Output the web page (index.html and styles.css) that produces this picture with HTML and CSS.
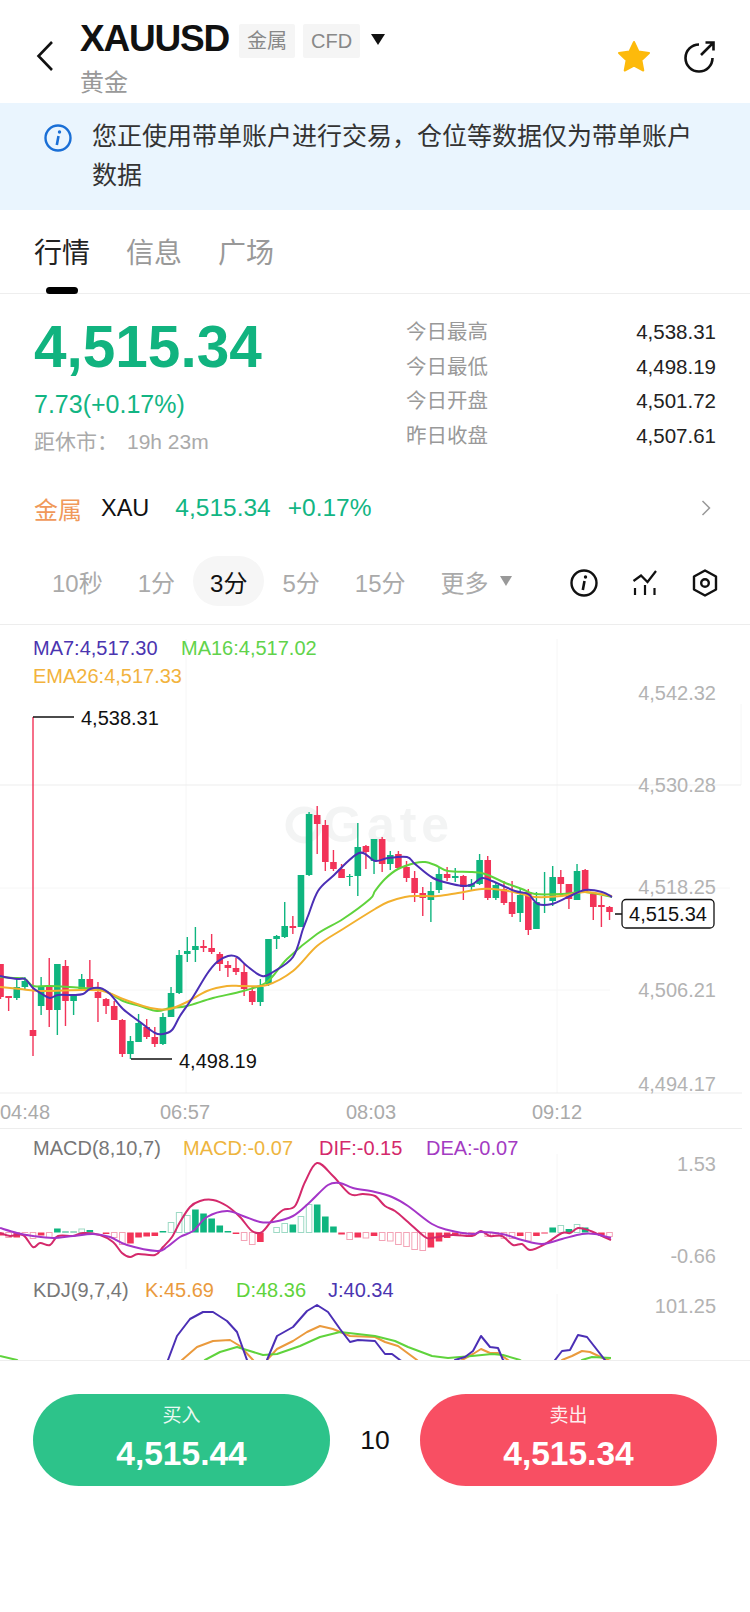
FILE: index.html
```html
<!DOCTYPE html>
<html lang="zh-CN">
<head>
    <meta charset="UTF-8">
    <meta name="viewport" content="width=device-width, initial-scale=1.0">
    <title>XAUUSD</title>
    <link rel="stylesheet" href="styles.css">
</head>
<body>
    <div class="header">
        <svg class="back" width="18" height="32" viewBox="0 0 18 32"><path d="M16 2 2.5 16 16 30" fill="none" stroke="#111" stroke-width="2.6"/></svg>
        <div class="title">
            <div class="title-row">
                <span class="symbol">XAUUSD</span>
                <span class="tag">金属</span>
                <span class="tag">CFD</span>
                <span class="caret"></span>
            </div>
            <div class="name">黄金</div>
        </div>
        <div class="actions">
            <svg width="36" height="34" viewBox="0 0 36 34"><path d="M18 3l4.6 9.6 10.4 1.4-7.6 7.2 1.9 10.3L18 26.6l-9.3 4.9 1.9-10.3L3 14l10.4-1.4z" fill="#fdba0b" stroke="#fdba0b" stroke-width="2" stroke-linejoin="round"/></svg>
            <svg width="34" height="34" viewBox="0 0 34 34"><path d="M16 5.500A13.500 13.500 0 1 0 29.500 19" fill="none" stroke="#111" stroke-width="2.600"/><path d="M18 16 30 4M22.500 3.500h8v8" fill="none" stroke="#111" stroke-width="2.600"/></svg>
        </div>
    </div>

    <div class="notice">
        <svg width="28" height="28" viewBox="0 0 28 28"><circle cx="14" cy="14" r="12.500" fill="none" stroke="#1a6fd6" stroke-width="2.400"/><circle cx="15.500" cy="8" r="1.700" fill="#1a6fd6"/><path d="M14.500 12 12.800 21" stroke="#1a6fd6" stroke-width="2.600" fill="none"/></svg>
        <p>您正使用带单账户进行交易，仓位等数据仅为带单账户数据</p>
    </div>

    <div class="tabs">
        <div class="tab active">行情</div>
        <div class="tab">信息</div>
        <div class="tab">广场</div>
    </div>

    <div class="quote">
        <div class="quote-left">
            <div class="price">4,515.34</div>
            <div class="change">7.73(+0.17%)</div>
            <div class="close-time"><span>距休市：</span><span>19h 23m</span></div>
        </div>
        <div class="quote-right">
            <div class="stat"><span>今日最高</span><b>4,538.31</b></div>
            <div class="stat"><span>今日最低</span><b>4,498.19</b></div>
            <div class="stat"><span>今日开盘</span><b>4,501.72</b></div>
            <div class="stat"><span>昨日收盘</span><b>4,507.61</b></div>
        </div>
    </div>

    <div class="sector">
        <span class="sector-name">金属</span>
        <span class="sector-code">XAU</span>
        <span class="sector-price">4,515.34</span>
        <span class="sector-price">+0.17%</span>
        <svg class="sector-arrow" width="10" height="16" viewBox="0 0 10 16"><path d="M1.500 1 8.500 8l-7 7" fill="none" stroke="#999" stroke-width="1.500"/></svg>
    </div>

    <div class="periods">
        <div class="period">10秒</div>
        <div class="period">1分</div>
        <div class="period active">3分</div>
        <div class="period">5分</div>
        <div class="period">15分</div>
        <div class="period">更多<span class="more-caret"></span></div>
        <div class="tools">
            <svg width="28" height="28" viewBox="0 0 28 28"><circle cx="14" cy="14" r="12.500" fill="none" stroke="#111" stroke-width="2.400"/><circle cx="15.500" cy="8" r="1.700" fill="#111"/><path d="M14.500 12 12.800 21" stroke="#111" stroke-width="2.600" fill="none"/></svg>
            <svg width="26" height="26" viewBox="0 0 26 26"><path d="M1.500 11 9 5.500l6.500 6.500L24 1" fill="none" stroke="#111" stroke-width="2.200"/><path d="M3 18v7M13 15v10M22.500 18v7" stroke="#111" stroke-width="2.200"/></svg>
            <svg width="26" height="28" viewBox="0 0 26 28"><path d="M13 1.500 24 7.500v13L13 26.500 2 20.500v-13z" fill="none" stroke="#111" stroke-width="2.400" stroke-linejoin="round"/><circle cx="13" cy="14" r="3.800" fill="none" stroke="#111" stroke-width="2.400"/></svg>
        </div>
    </div>

    <svg class="chart" id="chart" width="750" height="736" viewBox="0 625 750 736">
        <g id="grid">
            <path class="grid-faint" d="M186 640V1094M557 640V1094M741 705V786M186 1140V1270M557 1155V1270M557 1295V1361M0 889H730M0 991H610"/>
            <path class="grid" d="M0 625.500H750M0 786H741M0 1094H742M0 1129.500H742"/>
        </g>
        <g class="watermark">
            <circle cx="304" cy="826" r="15" fill="none" stroke="#f3f4f4" stroke-width="7"/>
            <text x="323" y="843">Gate</text>
        </g>

        <g id="candles"></g>
        <polyline class="line smooth" stroke="#5fd33c" points="0,978 13,979 25,980 33,987 50,987 83,989 103,991 123,1002 140,1007 157,1012 170,1009 187,1007 213,999 243,992 267,983 287,960 317,935 343,920 370,900 375,892 385,880 398,870 415,864 425,863 435,866 448,872 472,873 485,875 508,885 522,890 535,895 562,895 585,893 612,898"/>
        <polyline class="line smooth" stroke="#f2b02e" points="0,988 20,990 40,992 83,991 103,992 123,1000 143,1007 157,1010 170,1010 187,1003 207,992 227,987 243,987 267,986 293,972 317,947 343,930 375,910 388,903 405,898 418,897 438,897 458,894 482,890 502,891 522,895 535,898 562,897 585,893 612,897"/>
        <polyline class="line smooth" stroke="#4b2fb5" points="0,977 17,980 25,980 33,989 42,995 50,999 58,996 73,996 83,995 90,990 100,989 110,995 123,1010 140,1023 155,1034 163,1035 172,1031 180,1017 193,998 207,975 217,963 228,957 237,958 247,967 262,977 273,973 293,958 303,930 308,917 318,892 333,877 359,854 375,862 388,859 407,858 415,865 433,879 452,885 465,887 473,885 482,879 492,882 515,892 528,895 538,905 552,905 568,898 585,891 602,893 612,898"/>

        <path class="mark" d="M33 718H74M131 1060H172M615 915H622"/>
        <text class="t-dark" x="81" y="726">4,538.31</text>
        <text class="t-dark" x="179" y="1069">4,498.19</text>
        <rect class="last-box" x="622" y="900.500" width="92" height="28.500" rx="4"/>
        <text class="t-dark" x="668" y="922" text-anchor="middle">4,515.34</text>

        <text class="t-legend" x="33" y="656" fill="#4b35b0">MA7:4,517.30</text>
        <text class="t-legend" x="181" y="656" fill="#61d34b">MA16:4,517.02</text>
        <text class="t-legend" x="33" y="683.500" fill="#f2b33d">EMA26:4,517.33</text>

        <g class="t-axis">
            <text x="716" y="701">4,542.32</text>
            <text x="716" y="793">4,530.28</text>
            <text x="716" y="895">4,518.25</text>
            <text x="716" y="998">4,506.21</text>
            <text x="716" y="1092">4,494.17</text>
            <text x="716" y="1172">1.53</text>
            <text x="716" y="1264">-0.66</text>
            <text x="716" y="1314">101.25</text>
        </g>
        <g class="t-time">
            <text x="25" y="1120">04:48</text>
            <text x="185" y="1120">06:57</text>
            <text x="371" y="1120">08:03</text>
            <text x="557" y="1120">09:12</text>
        </g>

        <text class="t-legend" x="33" y="1156" fill="#777">MACD(8,10,7)</text>
        <text class="t-legend" x="183" y="1156" fill="#eeb53e">MACD:-0.07</text>
        <text class="t-legend" x="319" y="1156" fill="#d4296b">DIF:-0.15</text>
        <text class="t-legend" x="426" y="1156" fill="#a33bc2">DEA:-0.07</text>
        <g id="macd"></g>
        <polyline class="line smooth" stroke="#d4296b" points="0,1234 10,1237 23,1236 33,1248 40,1244 50,1246 58,1237 73,1237 83,1234 100,1236 113,1243 122,1254 130,1258 138,1255 155,1256 163,1248 172,1238 180,1223 190,1208 200,1202 213,1201 227,1207 240,1218 252,1232 262,1233 273,1220 283,1211 295,1207 305,1183 317,1164 333,1177 350,1195 363,1195 375,1197 385,1207 395,1212 408,1223 425,1238 432,1239 452,1236 472,1237 481,1232 490,1237 502,1237 513,1246 522,1245 530,1251 545,1245 562,1234 570,1234 578,1229 588,1231 602,1237 611,1241"/>
        <polyline class="line smooth" stroke="#a435c8" points="0,1229 17,1234 33,1237 53,1239 73,1237 93,1235 110,1238 127,1246 157,1252 167,1248 180,1238 193,1232 207,1218 227,1212 243,1217 260,1223 273,1223 293,1217 310,1203 328,1186 340,1184 353,1189 375,1193 392,1198 408,1207 432,1225 448,1231 472,1235 481,1233 502,1235 522,1241 542,1245 562,1240 582,1235 595,1235 611,1239"/>

        <text class="t-legend" x="33" y="1298" fill="#777">KDJ(9,7,4)</text>
        <text class="t-legend" x="145" y="1298" fill="#ea9a3d">K:45.69</text>
        <text class="t-legend" x="236" y="1298" fill="#5fd33c">D:48.36</text>
        <text class="t-legend" x="328" y="1298" fill="#4b35b0">J:40.34</text>
        <polyline class="line" stroke="#ea9a3d" points="170,1375 182,1361 197,1348 213,1342 230,1341 240,1347 253,1361 262,1372 267,1361 277,1350 293,1342 307,1333 320,1327 333,1330 350,1337 375,1338 385,1343 398,1347 417,1361 430,1375 455,1375 462,1361 473,1355 481,1350 490,1354 498,1354 508,1361 520,1370 555,1370 562,1361 572,1357 582,1352 590,1353 605,1360 611,1362"/>
        <polyline class="line" stroke="#5fd33c" points="0,1357 17,1361 30,1375 190,1375 205,1361 220,1353 237,1348 250,1352 263,1356 277,1355 300,1347 320,1338 340,1333 375,1337 395,1342 408,1348 432,1357 448,1359 472,1357 492,1355 503,1356 520,1361 540,1375 570,1375 582,1361 592,1358 611,1359"/>
        <polyline class="line" stroke="#4b2fb5" points="160,1375 168,1361 177,1337 190,1320 203,1313 213,1313 227,1322 237,1333 247,1361 250,1372 262,1372 267,1361 277,1337 293,1328 307,1312 317,1306 328,1313 340,1330 350,1343 358,1341 375,1342 385,1355 392,1355 400,1361 420,1375 448,1375 455,1361 465,1358 473,1352 481,1337 490,1348 498,1349 503,1361 525,1375 548,1375 555,1361 562,1352 570,1351 578,1336 587,1338 605,1361 610,1370"/>
    </svg>

    <div class="footer">
        <div class="trade buy">
            <span class="trade-label">买入</span>
            <span class="trade-price">4,515.44</span>
        </div>
        <div class="spread">10</div>
        <div class="trade sell">
            <span class="trade-label">卖出</span>
            <span class="trade-price">4,515.34</span>
        </div>
    </div>

    <script src="chart.js"></script>
</body>
</html>
```

FILE: styles.css
```css
* {
    box-sizing: border-box;
}

body {
    font-family: "Liberation Sans", "Noto Sans CJK SC", sans-serif;
    margin: 0;
    padding: 0;
    width: 750px;
    height: 1612px;
    overflow: hidden;
    background-color: #fff;
    color: #111;
}

.header {
    display: flex;
    height: 103px;
    padding-left: 36px;
}

.back {
    margin-top: 40px;
}

.title {
    margin-left: 26px;
    padding-top: 21px;
}

.title-row {
    display: flex;
    align-items: center;
    height: 36px;
}

.symbol {
    font-size: 37px;
    font-weight: bold;
    letter-spacing: -1.200px;
    margin-right: 10px;
}

.tag {
    background-color: #f5f5f5;
    color: #888;
    font-size: 20px;
    height: 34px;
    line-height: 34px;
    padding: 0 8px;
    margin-right: 8px;
    border-radius: 2px;
    margin-top: 3px;
}

.caret {
    margin-left: 3px;
    margin-top: 0;
    border-left: 7px solid transparent;
    border-right: 7px solid transparent;
    border-top: 11px solid #111;
}

.name {
    color: #999;
    font-size: 24px;
    line-height: 30px;
    margin-top: 11px;
}

.actions {
    display: flex;
    gap: 31px;
    margin-left: auto;
    margin-top: 39px;
    padding-right: 33px;
    align-items: flex-start;
}

.notice {
    display: flex;
    height: 107px;
    padding: 14px 48px 0 44px;
    background-color: #eaf5fe;
}

.notice svg {
    flex: none;
    margin-top: 7px;
}

.notice p {
    margin: 0 0 0 20px;
    font-size: 25px;
    line-height: 39px;
    color: #333;
}

.tabs {
    display: flex;
    gap: 36px;
    height: 84px;
    padding: 24px 0 0 34px;
    border-bottom: 1px solid #eee;
}

.tab {
    position: relative;
    font-size: 28px;
    line-height: 40px;
    color: #999;
}

.tab.active {
    color: #222;
}

.tab.active::after {
    content: "";
    position: absolute;
    left: 12px;
    top: 53px;
    width: 32px;
    height: 7px;
    border-radius: 4px;
    background-color: #000;
}

.quote {
    display: flex;
    justify-content: space-between;
    height: 196px;
    padding: 20px 34px 0 34px;
}

.price {
    color: #11b37f;
    font-size: 58.500px;
    font-weight: bold;
    line-height: 66px;
}

.change {
    color: #12b583;
    font-size: 25px;
    line-height: 30px;
    margin-top: 9px;
}

.close-time {
    display: flex;
    gap: 9px;
    color: #aaa;
    font-size: 21px;
    line-height: 28px;
    margin-top: 9px;
}

.quote-right {
    width: 310px;
    padding-top: 1px;
}

.stat {
    display: flex;
    justify-content: space-between;
    height: 34.500px;
    line-height: 34.500px;
    font-size: 20.500px;
    color: #999;
}

.stat b {
    font-weight: normal;
    color: #222;
}

.sector {
    display: flex;
    align-items: center;
    height: 36px;
    font-size: 24.500px;
    padding: 0 39px 0 34px;
    color: #12b583;
}

.sector-name {
    color: #f0995a;
    font-size: 24px;
    margin-right: 19px;
}

.sector-code {
    color: #111;
    font-size: 23.500px;
    margin-right: 26px;
}

.sector-price {
    margin-right: 17px;
}

.sector-arrow {
    margin-left: auto;
}

.periods {
    display: flex;
    align-items: center;
    height: 50px;
    margin-top: 30px;
    padding: 0 32px 0 35px;
}

.period {
    display: flex;
    align-items: center;
    height: 50px;
    padding: 0 17px;
    margin-right: 1px;
    font-size: 24px;
    color: #aaa;
    border-radius: 25px;
}

.period.active {
    color: #111;
    background-color: #f6f6f6;
}

.more-caret {
    margin-left: 12px;
    border-left: 6.500px solid transparent;
    border-right: 6.500px solid transparent;
    border-top: 10px solid #999;
}

.tools {
    display: flex;
    align-items: center;
    gap: 34px;
    margin-left: auto;
    margin-top: 3px;
}

.chart {
    display: block;
    margin-top: 18px;
}

.chart text {
    font-size: 20px;
}

.grid {
    fill: none;
    stroke: #ededed;
    stroke-width: 1;
}

.grid-faint {
    fill: none;
    stroke: #f6f6f6;
    stroke-width: 1;
}

.chart .watermark text {
    font-size: 50px;
    font-weight: bold;
    letter-spacing: 5px;
    fill: #f3f4f4;
}

.line {
    fill: none;
    stroke-width: 2;
    stroke-linejoin: round;
}

.mark {
    fill: none;
    stroke: #111;
    stroke-width: 1.300;
}

.last-box {
    fill: #fff;
    stroke: #111;
    stroke-width: 1.300;
}

.t-dark {
    fill: #111;
}

.t-axis text {
    fill: #b3b3b3;
    text-anchor: end;
}

.t-time text {
    fill: #aaa;
    text-anchor: middle;
}

.footer {
    display: flex;
    justify-content: space-between;
    align-items: flex-start;
    height: 251px;
    padding: 33px 33px 0 33px;
    border-top: 1px solid #eee;
    background-color: #fff;
}

.trade {
    display: flex;
    flex-direction: column;
    align-items: center;
    width: 297px;
    height: 92px;
    padding-top: 10px;
    border-radius: 46px;
    color: #fff;
}

.buy {
    background-color: #2dc38a;
}

.sell {
    background-color: #f84f63;
}

.trade-label {
    font-size: 19px;
    line-height: 24px;
    opacity: 0.9;
}

.trade-price {
    font-size: 33.500px;
    font-weight: bold;
    line-height: 40px;
    margin-top: 6px;
}

.spread {
    font-size: 26.500px;
    line-height: 92px;
}
```

FILE: chart.js
```js
const SVG_NS = 'http://www.w3.org/2000/svg';
const GREEN = '#0fb57f';
const RED = '#f23358';
const STEP = 8.12;
const X0 = 33;

// index, wick top, wick bottom, body top, body bottom, colour
const candles = [
    [-4, 965, 1000, 965, 998, 'r'], [-3, 997, 1012, 997, 999, 'r'], [-2, 979, 1001, 988, 999, 'g'],
    [-1, 978, 990, 982, 988, 'g'], [0, 718, 1057, 1031, 1037, 'r'], [1, 978, 1016, 987, 1007, 'g'],
    [2, 959, 1028, 988, 1011, 'r'], [3, 965, 1036, 965, 1011, 'g'], [4, 961, 1027, 967, 1002, 'r'],
    [5, 995, 1016, 996, 1002, 'g'], [6, 975, 991, 980, 990, 'g'], [7, 961, 991, 980, 989, 'r'],
    [8, 983, 1023, 993, 999, 'r'], [9, 999, 1015, 1000, 1007, 'r'], [10, 1002, 1021, 1007, 1021, 'r'],
    [11, 1020, 1058, 1021, 1055, 'r'], [12, 1037, 1060, 1042, 1055, 'g'], [13, 1015, 1043, 1024, 1043, 'g'],
    [14, 1020, 1040, 1028, 1038, 'r'], [15, 1028, 1048, 1038, 1045, 'r'], [16, 1014, 1046, 1018, 1045, 'g'],
    [17, 988, 1018, 994, 1018, 'g'], [18, 951, 995, 956, 994, 'g'], [19, 938, 963, 952, 955, 'g'],
    [20, 928, 963, 947, 951, 'g'], [21, 941, 953, 947, 949, 'r'], [22, 935, 955, 949, 953, 'r'],
    [23, 953, 972, 955, 965, 'r'], [24, 962, 978, 966, 969, 'r'], [25, 959, 976, 969, 973, 'r'],
    [26, 965, 997, 973, 990, 'r'], [27, 987, 1006, 992, 1003, 'r'], [28, 980, 1007, 988, 1003, 'g'],
    [29, 940, 987, 940, 985, 'g'], [30, 936, 950, 937, 940, 'g'], [31, 903, 939, 927, 938, 'g'],
    [32, 917, 935, 927, 929, 'r'], [33, 876, 928, 876, 928, 'g'], [34, 813, 877, 815, 876, 'g'],
    [35, 807, 855, 816, 825, 'r'], [36, 821, 872, 826, 863, 'r'], [37, 851, 872, 863, 870, 'r'],
    [38, 865, 879, 870, 879, 'r'], [39, 875, 887, 877, 878, 'g'], [40, 824, 897, 848, 877, 'g'],
    [41, 846, 870, 847, 853, 'r'], [42, 840, 875, 840, 862, 'g'], [43, 838, 873, 840, 865, 'r'],
    [44, 852, 871, 856, 865, 'g'], [45, 852, 870, 855, 869, 'r'], [46, 862, 883, 868, 879, 'r'],
    [47, 872, 903, 879, 894, 'r'], [48, 888, 917, 894, 899, 'r'], [49, 883, 923, 892, 901, 'g'],
    [50, 868, 894, 875, 891, 'g'], [51, 868, 882, 875, 879, 'r'], [52, 869, 883, 877, 879, 'g'],
    [53, 876, 901, 877, 888, 'r'], [54, 880, 891, 885, 888, 'g'], [55, 855, 886, 861, 885, 'g'],
    [56, 857, 901, 861, 899, 'r'], [57, 883, 901, 886, 899, 'g'], [58, 882, 906, 890, 904, 'r'],
    [59, 882, 918, 903, 915, 'r'], [60, 890, 923, 896, 914, 'g'], [61, 890, 936, 893, 931, 'r'],
    [62, 893, 930, 903, 930, 'g'], [63, 873, 914, 895, 896, 'g'], [64, 867, 907, 878, 902, 'g'],
    [65, 871, 897, 878, 885, 'r'], [66, 885, 910, 885, 900, 'r'], [67, 865, 901, 872, 901, 'g'],
    [68, 870, 893, 871, 893, 'r'], [69, 893, 921, 895, 908, 'r'], [70, 897, 928, 906, 908, 'r'],
    [71, 907, 921, 908, 913, 'r']
];

// MACD bars from index -4, height above the zero line in px, [h, 1] is a hollow bar
const macd = [
    -3, [-5, 1], -5, [-2, 1], [-6, 1], -3, [-5, 1], 4, 1, [1, 1], [3.5, 1], 2.5, 0, -1.5, [-5, 1], [-12, 1],
    -11, -5, -4, -3.5, 1.5, [10, 1], [20, 1], [17, 1], 23, 19, 14, 7, 1.5, -1.5, [-8, 1], [-12, 1],
    -9.5, 0, [5, 1], [9, 1], 8, [16, 1], [28, 1], 28, 16, 6, -2, [-7, 1], -5, [-5.5, 1], -3.5, [-8, 1],
    [-8.5, 1], [-12, 1], [-14, 1], [-17, 1], [-18, 1], -15, -9, -5.5, -3.5, [-3, 1], [-3, 1], 0, [-4, 1],
    [-3.5, 1], [-6, 1], [-6, 1], -3.5, [-8.5, 1], -3.5, -1, 5, [7, 1], 3.5, [8, 1], 5, 0, -3, [-4, 1]
];

function addRect(parent, x, y, w, h, fill, stroke) {
    const r = document.createElementNS(SVG_NS, 'rect');
    r.setAttribute('x', x);
    r.setAttribute('y', y);
    r.setAttribute('width', w);
    r.setAttribute('height', h);
    r.setAttribute('fill', fill);
    if (stroke) {
        r.setAttribute('stroke', stroke);
        r.setAttribute('stroke-width', 1);
    }
    parent.appendChild(r);
}

const candleGroup = document.getElementById('candles');
candles.forEach(function (c) {
    const x = X0 + STEP * c[0];
    const color = c[5] === 'r' ? RED : GREEN;
    addRect(candleGroup, x - 0.7, c[1], 1.4, c[2] - c[1], color);
    addRect(candleGroup, x - 3.3, c[3], 6.6, c[4] - c[3], color);
});

const macdGroup = document.getElementById('macd');
const ZERO = 1233.5;
macd.forEach(function (item, n) {
    const hollow = Array.isArray(item);
    const h = hollow ? item[0] : item;
    if (h === 0) return;
    const x = X0 + STEP * (n - 4);
    const top = h > 0 ? ZERO - h : ZERO;
    const height = Math.abs(h);
    if (hollow) {
        addRect(macdGroup, x - 2.8, top, 5.6, height, '#fff', h > 0 ? '#9dd9c4' : '#f3a3b6');
    } else {
        addRect(macdGroup, x - 3.3, top, 6.6, height, h > 0 ? GREEN : RED);
    }
});

// turn the moving average polylines into smooth curves (catmull-rom)
document.querySelectorAll('polyline.smooth').forEach(function (line) {
    const p = line.getAttribute('points').split(' ').map(function (s) {
        return s.split(',').map(Number);
    });
    let d = 'M' + p[0].join(' ');
    for (let i = 0; i < p.length - 1; i++) {
        const a = p[i - 1] || p[i];
        const b = p[i];
        const c = p[i + 1];
        const e = p[i + 2] || c;
        d += ' C' + (b[0] + (c[0] - a[0]) / 6) + ' ' + (b[1] + (c[1] - a[1]) / 6) +
            ' ' + (c[0] - (e[0] - b[0]) / 6) + ' ' + (c[1] - (e[1] - b[1]) / 6) +
            ' ' + c[0] + ' ' + c[1];
    }
    const path = document.createElementNS(SVG_NS, 'path');
    path.setAttribute('class', 'line');
    path.setAttribute('stroke', line.getAttribute('stroke'));
    path.setAttribute('d', d);
    line.replaceWith(path);
});
```
